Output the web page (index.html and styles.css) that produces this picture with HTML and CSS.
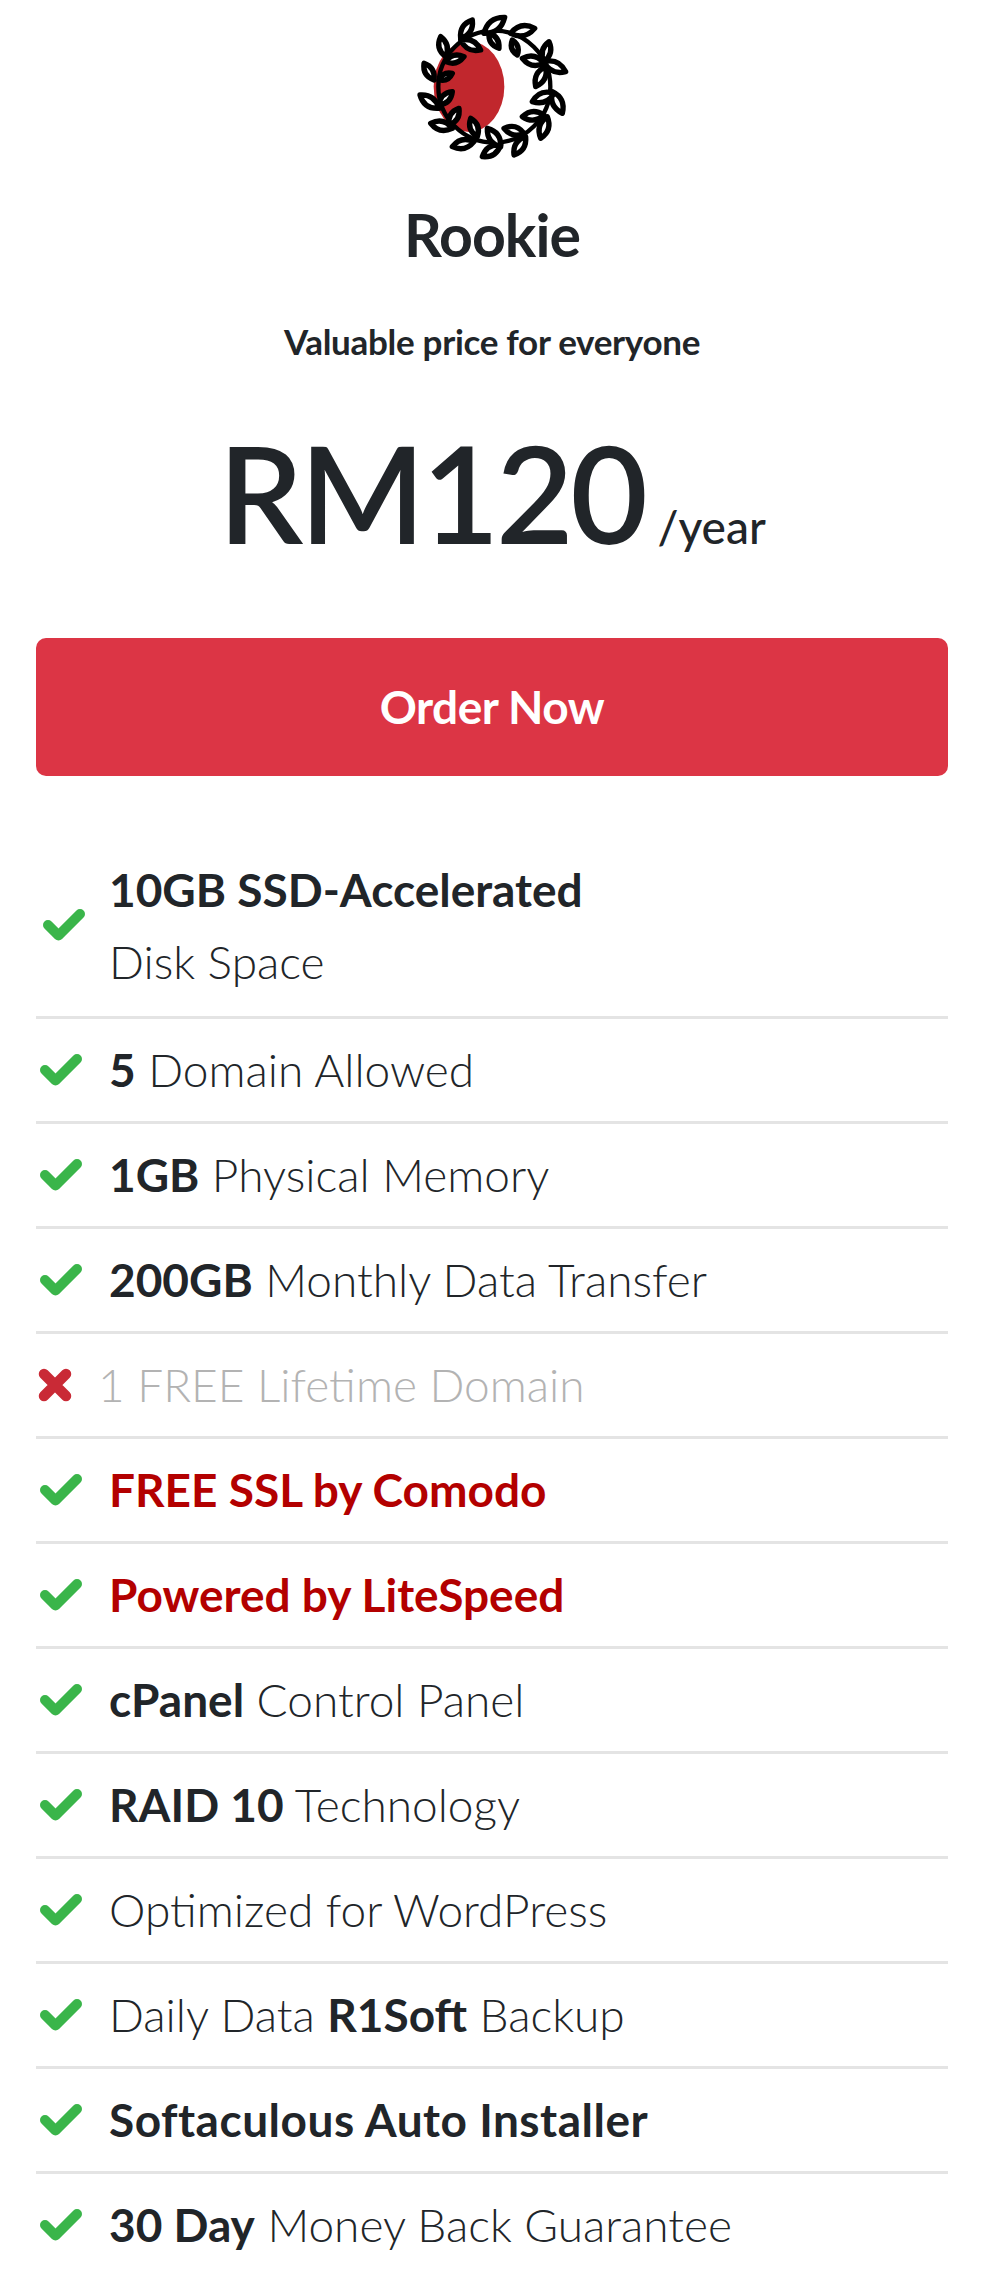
FILE: index.html
```html
<!DOCTYPE html>
<html lang="en">
<head>
<meta charset="utf-8">
<title>Rookie plan</title>
<link rel="stylesheet" href="styles.css">
</head>
<body>
<main class="plan">
  <svg class="logo" viewBox="-26 0 720 510" aria-hidden="true">
    <ellipse class="logo-moon" cx="265" cy="260" rx="106" ry="136"/>
    <circle class="logo-ring" cx="341" cy="260" r="168"/>
    <g class="logo-leaves">
      <path d="M310 100Q360 101 372 52Q322 51 310 100Z"/>
      <path d="M240 115Q280 102 275 60Q235 74 240 115Z"/>
      <path d="M195 170Q211 134 180 110Q163 146 195 170Z"/>
      <path d="M160 240Q165 203 130 190Q125 227 160 240Z"/>
      <path d="M175 325Q162 282 118 285Q130 328 175 325Z"/>
      <path d="M215 385Q188 351 150 370Q176 403 215 385Z"/>
      <path d="M280 425Q241 406 215 440Q253 458 280 425Z"/>
      <path d="M360 435Q318 430 305 470Q346 474 360 435Z"/>
      <path d="M400 465Q439 451 435 410Q395 423 400 465Z"/>
      <path d="M480 415Q516 390 500 350Q464 374 480 415Z"/>
      <path d="M545 340Q556 295 515 275Q504 319 545 340Z"/>
      <path d="M555 215Q534 174 490 185Q510 226 555 215Z"/>
      <path d="M505 125Q473 149 490 185Q521 161 505 125Z"/>
      <path d="M390 100Q432 121 462 85Q420 63 390 100Z"/>
      <path d="M325 100Q322 134 355 145Q358 110 325 100Z"/>
      <path d="M240 120Q258 159 300 150Q282 111 240 120Z"/>
      <path d="M195 185Q228 199 250 170Q216 155 195 185Z"/>
      <path d="M175 240Q203 246 215 220Q187 214 175 240Z"/>
      <path d="M175 315Q211 311 215 275Q179 279 175 315Z"/>
      <path d="M205 375Q240 362 235 325Q200 338 205 375Z"/>
      <path d="M270 355Q258 390 290 410Q302 374 270 355Z"/>
      <path d="M320 385Q318 428 360 440Q362 396 320 385Z"/>
      <path d="M370 385Q394 416 430 400Q406 368 370 385Z"/>
      <path d="M425 350Q459 373 490 345Q455 321 425 350Z"/>
      <path d="M455 305Q497 318 520 280Q477 266 455 305Z"/>
      <path d="M465 260Q504 242 495 200Q456 218 465 260Z"/>
      <path d="M425 175Q451 208 490 190Q463 156 425 175Z"/>
      <path d="M395 120Q384 148 410 165Q420 136 395 120Z"/>
    </g>
  </svg>
  <h1 class="name">Rookie</h1>
  <p class="tagline">Valuable price for everyone</p>
  <p class="price"><span class="amount">RM120</span> <span class="period">/year</span></p>
  <a class="order" href="#">Order Now</a>
  <ul class="features">
    <li class="row row-tall"><svg class="tick tick-tall"><use href="#check"/></svg><span class="text"><b>10GB SSD-Accelerated</b><br>Disk Space</span></li>
    <li class="row"><svg class="tick"><use href="#check"/></svg><span class="text"><b>5</b> Domain Allowed</span></li>
    <li class="row"><svg class="tick"><use href="#check"/></svg><span class="text"><b>1GB</b> Physical Memory</span></li>
    <li class="row"><svg class="tick"><use href="#check"/></svg><span class="text"><b>200GB</b> Monthly Data Transfer</span></li>
    <li class="row"><svg class="cross"><use href="#times"/></svg><span class="text off">1 FREE Lifetime Domain</span></li>
    <li class="row"><svg class="tick"><use href="#check"/></svg><span class="text hot">FREE SSL by Comodo</span></li>
    <li class="row"><svg class="tick"><use href="#check"/></svg><span class="text hot">Powered by LiteSpeed</span></li>
    <li class="row"><svg class="tick"><use href="#check"/></svg><span class="text"><b>cPanel</b> Control Panel</span></li>
    <li class="row"><svg class="tick"><use href="#check"/></svg><span class="text"><b>RAID 10</b> Technology</span></li>
    <li class="row"><svg class="tick"><use href="#check"/></svg><span class="text">Optimized for WordPress</span></li>
    <li class="row"><svg class="tick"><use href="#check"/></svg><span class="text">Daily Data <b>R1Soft</b> Backup</span></li>
    <li class="row"><svg class="tick"><use href="#check"/></svg><span class="text"><b class="wide">Softaculous Auto Installer</b></span></li>
    <li class="row"><svg class="tick"><use href="#check"/></svg><span class="text"><b>30 Day</b> Money Back Guarantee</span></li>
  </ul>
</main>
<svg class="defs" aria-hidden="true">
  <symbol id="check" viewBox="0 0 42 34"><path d="M5 17 15.5 27.5 37 6" fill="none" stroke="currentColor" stroke-width="10" stroke-linejoin="round" stroke-linecap="round"/></symbol>
  <symbol id="times" viewBox="0 0 34 34"><path d="M6 6 28 28M28 6 6 28" fill="none" stroke="currentColor" stroke-width="10.5" stroke-linecap="round"/></symbol>
</svg>
</body>
</html>
```
FILE: styles.css
```css
html, body { margin: 0; background: #fff; }
body { font-family: "Lato", "Noto Sans", sans-serif; color: #212529; }
.plan { display: flex; flex-direction: column; align-items: center; padding: 0 49px 0 36px; }
.logo { width: 240px; height: 170px; display: block; }
.logo-moon { fill: #c1272d; }
.logo-ring { fill: none; stroke: #000; stroke-width: 13; }
.logo-leaves path { fill: #fff; stroke: #000; stroke-width: 16; stroke-linejoin: round; }
.name { margin: 31px 0 0; font-size: 59px; line-height: 68px; font-weight: 700; letter-spacing: -1px; }
.tagline { margin: 47px 0 0; font-size: 35px; line-height: 50px; font-weight: 700; letter-spacing: -.3px; }
.price { margin: 52px 0 0; display: flex; align-items: baseline; gap: 13px; line-height: 150px; }
.amount { font-size: 134px; font-weight: 600; letter-spacing: -3.5px; }
.period { font-size: 46px; font-weight: 500; }
.order { display: block; align-self: stretch; margin-top: 36px; height: 138px; line-height: 138px; text-align: center; background: #dc3545; color: #fff; border-radius: 10px; font-size: 46px; font-weight: 700; text-decoration: none; letter-spacing: -.5px; }
.features { list-style: none; margin: 63px 0 0; padding: 0; align-self: stretch; }
.row { display: flex; align-items: center; gap: 27px; padding: 15px 0; border-bottom: 3px solid #e4e4e4; font-size: 46px; line-height: 72px; font-weight: 300; }
.row-tall { padding-bottom: 18px; }
.row:last-child { border-bottom: 0; }
.row svg { flex: none; }
.text { display: block; }
.text b { font-weight: 700; }
.text .wide { letter-spacing: .5px; }
.tick { width: 42px; height: 34px; color: #3ab54a; margin-left: 4px; }
.tick-tall { margin-left: 7px; margin-right: -3px; margin-bottom: 3px; }
.cross { width: 34px; height: 34px; color: #c92a36; margin-left: 2px; }
.off { color: #b3b3b3; margin-left: -1px; }
.hot { color: #b30000; font-weight: 700; }
.defs { display: none; }
```
